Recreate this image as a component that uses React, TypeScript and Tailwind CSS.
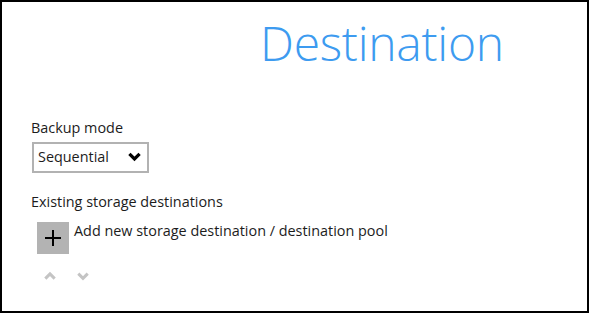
import React from "react";

function Chevron({ up = false, className = "" }: { up?: boolean; className?: string }) {
  return (
    <svg viewBox="0 0 12 9" className={className} fill="none">
      <path
        d={up ? "M1.3 7.6 L6 2.9 L10.7 7.6" : "M1.3 1.6 L6 6.3 L10.7 1.6"}
        stroke="currentColor"
        strokeWidth="3"
        strokeLinecap="butt"
        strokeLinejoin="miter"
      />
    </svg>
  );
}

export default function App() {
  return (
    <div
      className="w-[589px] h-[313px] bg-white border-2 border-black overflow-hidden text-[#1c1c1c]"
      style={{ fontFamily: '"Open Sans", "Liberation Sans", sans-serif' }}
    >
      <div className="flex flex-col items-start pl-[29px]">
        <div className="pl-[229px] pt-[17px] h-[116.7px]">
          <span className="block text-[48px] font-light leading-none text-[#3d9bf0] tracking-[-0.25px]">
            Destination
          </span>
        </div>
        <div className="text-[14.4px] leading-[18px]">Backup mode</div>
        <div className="mt-[5.3px] ml-[1px] w-[117px] h-[31px] border-2 border-[#b2b2b2] flex items-center pl-[4px] pr-[6px] justify-between">
          <span className="text-[14.4px] leading-[18px]">Sequential</span>
          <Chevron className="w-[13px] h-[10px] text-black" />
        </div>
        <div className="text-[14.4px] leading-[18px] mt-[20.4px]">Existing storage destinations</div>
        <div className="flex items-start mt-[10.6px] pl-[6px]">
          <div className="w-[32px] h-[32px] bg-[#b3b3b3] flex items-center justify-center">
            <svg viewBox="0 0 16 16" className="w-[16px] h-[16px]">
              <path d="M8 0 V16 M0 8 H16" stroke="black" strokeWidth="2" />
            </svg>
          </div>
          <span className="text-[14.4px] leading-[18px] ml-[5px]">
            Add new storage destination / destination pool
          </span>
        </div>
        <div className="flex items-start gap-[21px] pl-[13px] mt-[17px] text-[#c4c4c4]">
          <Chevron up className="w-[12px] h-[9px]" />
          <Chevron className="w-[12px] h-[9px] mt-[1px]" />
        </div>
      </div>
    </div>
  );
}
